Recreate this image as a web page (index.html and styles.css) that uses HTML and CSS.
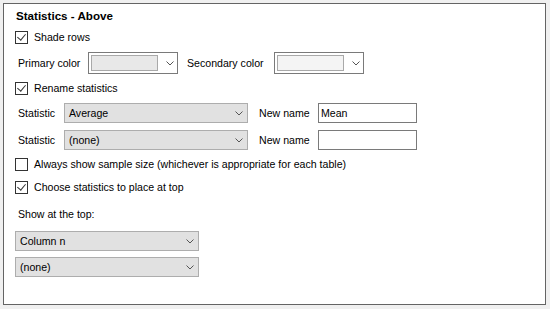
FILE: index.html
```html
<!DOCTYPE html>
<html lang="en">
<head>
    <meta charset="UTF-8">
    <title>Statistics - Above</title>
    <link rel="stylesheet" href="styles.css">
</head>
<body>
    <div class="panel">
        <div class="title">Statistics - Above</div>

        <div class="check-row shade">
            <span class="box checked"></span>
            <span>Shade rows</span>
        </div>

        <div class="color-row">
            <span class="label primary-label">Primary color</span>
            <div class="color-combo">
                <span class="swatch primary"></span>
                <svg class="chevron" width="8" height="5" viewBox="0 0 8 5"><polyline points="0.5,0.5 4,4 7.5,0.5"/></svg>
            </div>
            <span class="label secondary-label">Secondary color</span>
            <div class="color-combo">
                <span class="swatch secondary"></span>
                <svg class="chevron" width="8" height="5" viewBox="0 0 8 5"><polyline points="0.5,0.5 4,4 7.5,0.5"/></svg>
            </div>
        </div>

        <div class="check-row rename">
            <span class="box checked"></span>
            <span>Rename statistics</span>
        </div>

        <div class="stat-row first">
            <span class="label stat-label">Statistic</span>
            <div class="combo stat-combo">
                <span>Average</span>
                <svg class="chevron" width="8" height="5" viewBox="0 0 8 5"><polyline points="0.5,0.5 4,4 7.5,0.5"/></svg>
            </div>
            <span class="label name-label">New name</span>
            <div class="textbox">Mean</div>
        </div>

        <div class="stat-row">
            <span class="label stat-label">Statistic</span>
            <div class="combo stat-combo">
                <span>(none)</span>
                <svg class="chevron" width="8" height="5" viewBox="0 0 8 5"><polyline points="0.5,0.5 4,4 7.5,0.5"/></svg>
            </div>
            <span class="label name-label">New name</span>
            <div class="textbox"></div>
        </div>

        <div class="check-row always">
            <span class="box"></span>
            <span>Always show sample size (whichever is appropriate for each table)</span>
        </div>

        <div class="check-row choose">
            <span class="box checked"></span>
            <span>Choose statistics to place at top</span>
        </div>

        <div class="label top-label">Show at the top:</div>

        <div class="combo top-combo first-top">
            <span>Column n</span>
            <svg class="chevron" width="8" height="5" viewBox="0 0 8 5"><polyline points="0.5,0.5 4,4 7.5,0.5"/></svg>
        </div>
        <div class="combo top-combo">
            <span>(none)</span>
            <svg class="chevron" width="8" height="5" viewBox="0 0 8 5"><polyline points="0.5,0.5 4,4 7.5,0.5"/></svg>
        </div>
    </div>
</body>
</html>
```

FILE: styles.css
```css
* {
    margin: 0;
    padding: 0;
    box-sizing: border-box;
}

body {
    background: #f0f0f0;
    font-family: "Liberation Sans", Arial, sans-serif;
    font-size: 10.6px;
    color: #000;
    padding: 3px;
}

.panel {
    width: 543px;
    height: 302px;
    background: #fff;
    border: 1px solid #646464;
    padding: 3px 11px 0 11px;
}

.title {
    font-weight: bold;
    font-size: 11.6px;
    height: 18px;
    line-height: 18px;
    padding-left: 1px;
}

.check-row {
    display: flex;
    align-items: center;
    gap: 6px;
    height: 18px;
    line-height: 18px;
}

.shade { margin-top: 3px; }
.rename { margin-top: 5px; }
.always { margin-top: 5px; }
.choose { margin-top: 5px; }

.box {
    width: 13px;
    height: 13px;
    border: 1px solid #333;
    background: #fff;
    position: relative;
    flex: none;
}

.box.checked::after {
    content: "";
    position: absolute;
    left: 3px;
    top: 0px;
    width: 4px;
    height: 7px;
    border-right: 1px solid #333;
    border-bottom: 1px solid #333;
    transform: rotate(40deg);
}

.label {
    white-space: nowrap;
}

.color-row {
    display: flex;
    align-items: center;
    height: 22px;
    margin-top: 6px;
}

.primary-label {
    margin-left: 3px;
    width: 70px;
}

.secondary-label {
    margin-left: 9px;
    width: 87px;
}

.color-combo {
    width: 90px;
    height: 22px;
    border: 1px solid #7a7a7a;
    background: #fff;
    display: flex;
    align-items: center;
    padding: 2px;
}

.swatch {
    width: 67px;
    height: 16px;
    border: 1px solid #a9a9a9;
}

.swatch.primary { background: #e8e8e8; }
.swatch.secondary { background: #f4f4f4; }

.color-combo .chevron {
    margin-left: 8px;
}

.chevron {
    flex: none;
    fill: none;
    stroke: #555;
    stroke-width: 1;
}

.stat-row {
    display: flex;
    align-items: center;
    height: 20px;
    margin-top: 7px;
}

.stat-row.first { margin-top: 6px; }

.stat-label {
    margin-left: 3px;
    width: 46px;
}

.combo {
    height: 20px;
    background: #e1e1e1;
    border: 1px solid #adadad;
    display: flex;
    align-items: center;
    justify-content: space-between;
    padding: 0 4px 0 4px;
}

.stat-combo {
    width: 184px;
}

.name-label {
    margin-left: 11px;
    width: 59px;
}

.textbox {
    width: 99px;
    height: 20px;
    border: 1px solid #7a7a7a;
    background: #fff;
    line-height: 18px;
    padding-left: 2px;
}

.top-label {
    margin-top: 9px;
    margin-left: 3px;
    height: 18px;
    line-height: 18px;
}

.top-combo {
    width: 184px;
    margin-top: 6px;
}

.top-combo.first-top {
    margin-top: 8px;
}
```
